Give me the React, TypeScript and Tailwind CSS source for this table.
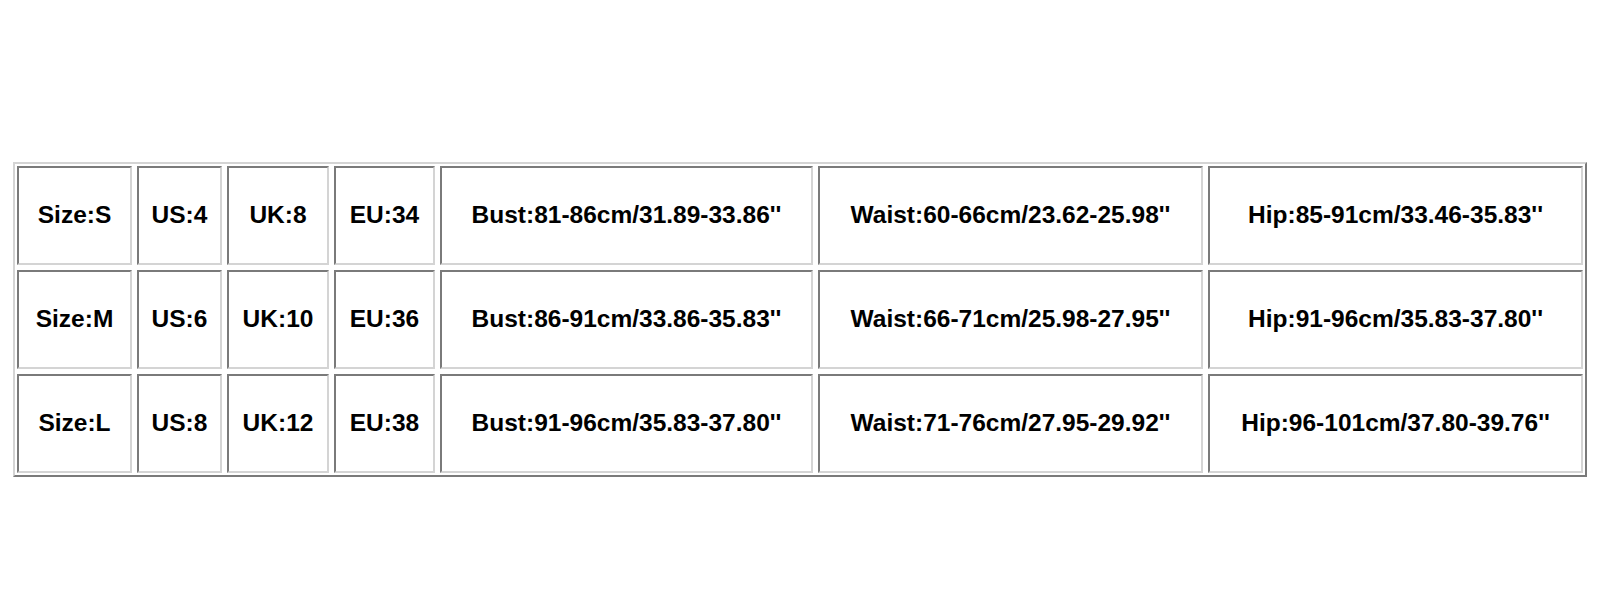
import React from "react";

const rows = [
  ["Size:S", "US:4", "UK:8", "EU:34", "Bust:81-86cm/31.89-33.86''", "Waist:60-66cm/23.62-25.98''", "Hip:85-91cm/33.46-35.83''"],
  ["Size:M", "US:6", "UK:10", "EU:36", "Bust:86-91cm/33.86-35.83''", "Waist:66-71cm/25.98-27.95''", "Hip:91-96cm/35.83-37.80''"],
  ["Size:L", "US:8", "UK:12", "EU:38", "Bust:91-96cm/35.83-37.80''", "Waist:71-76cm/27.95-29.92''", "Hip:96-101cm/37.80-39.76''"],
];

const App = () => {
  return (
    <div className="w-[1600px] h-[600px] bg-white pt-[162px] pl-[13px]" style={{ fontFamily: '"Liberation Sans", Arial, sans-serif' }}>
      <div className="w-fit border-2 border-t-[#d4d4d4] border-l-[#d4d4d4] border-r-[#7a7a7a] border-b-[#7a7a7a] p-[2px]">
        <div className="grid grid-cols-[115px_85px_102px_101px_373px_385px_375px] auto-rows-[99px] gap-[5px]">
          {rows.flat().map((text, idx) => (
            <div
              key={idx}
              className="flex items-center justify-center border-2 border-t-[#7a7a7a] border-l-[#7a7a7a] border-r-[#d4d4d4] border-b-[#d4d4d4] text-[24.5px] font-bold text-black whitespace-nowrap"
            >
              {text}
            </div>
          ))}
        </div>
      </div>
    </div>
  );
};

export default App;
